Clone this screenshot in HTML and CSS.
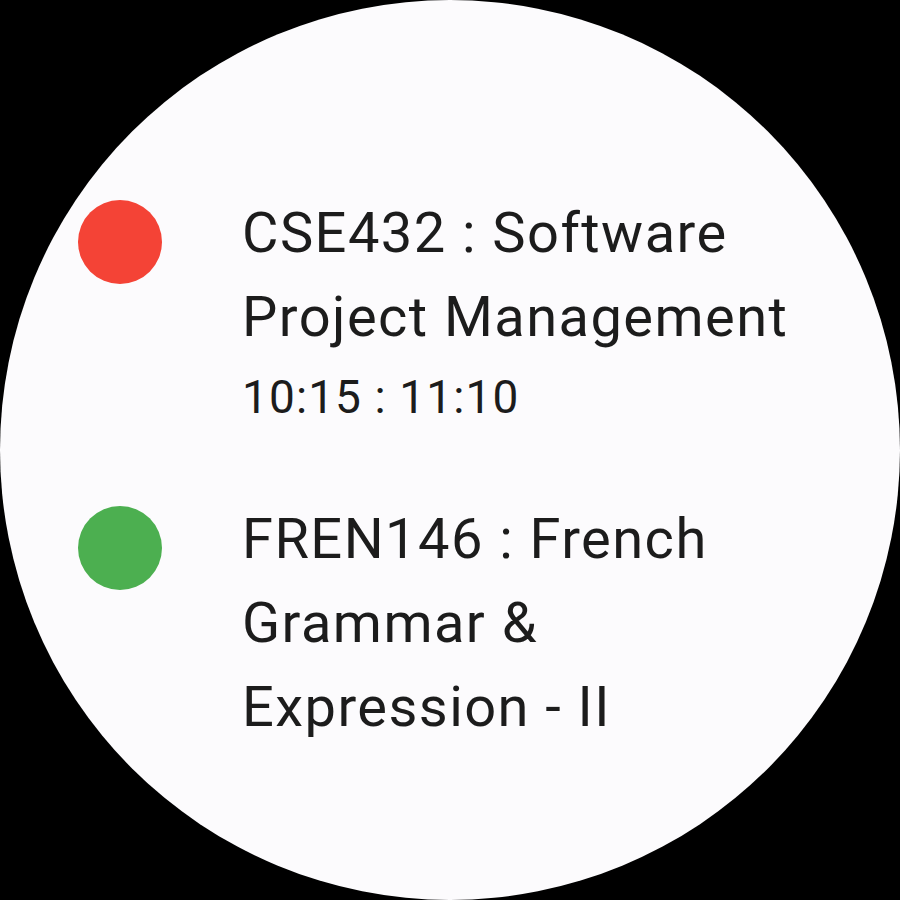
FILE: index.html
```html
<!DOCTYPE html>
<html>
<head>
<meta charset="utf-8">
<link rel="stylesheet" href="styles.css">
</head>
<body>
<div class="face">
  <div class="list">
    <div class="item">
      <span class="dot dot-red"></span>
      <div class="text">
        <div class="title">CSE432 : Software Project Management</div>
        <div class="time">10:15 : 11:10</div>
      </div>
    </div>
    <div class="item">
      <span class="dot dot-green"></span>
      <div class="text">
        <div class="title">FREN146 : French Grammar &amp; Expression - II</div>
      </div>
    </div>
  </div>
</div>
</body>
</html>
```
FILE: styles.css
```css
html, body {
  margin: 0;
  padding: 0;
  background: #000;
}
.face {
  width: 900px;
  height: 900px;
  border-radius: 50%;
  background: #fcfbfd;
  overflow: hidden;
  font-family: Roboto, "Liberation Sans", sans-serif;
  color: #1c1c1c;
}
.list {
  padding: 191px 0 0 78px;
  display: flex;
  flex-direction: column;
  gap: 61px;
}
.item {
  display: flex;
  align-items: flex-start;
  gap: 80px;
}
.dot {
  flex: none;
  width: 84px;
  height: 84px;
  border-radius: 50%;
  margin-top: 9px;
}
.dot-red { background: #f44336; }
.dot-green { background: #4caf50; }
.text {
  width: 570px;
}
.title {
  font-size: 56px;
  line-height: 84px;
  letter-spacing: 1.45px;
}
.time {
  font-size: 46px;
  line-height: 77px;
  letter-spacing: 1.1px;
}
```
